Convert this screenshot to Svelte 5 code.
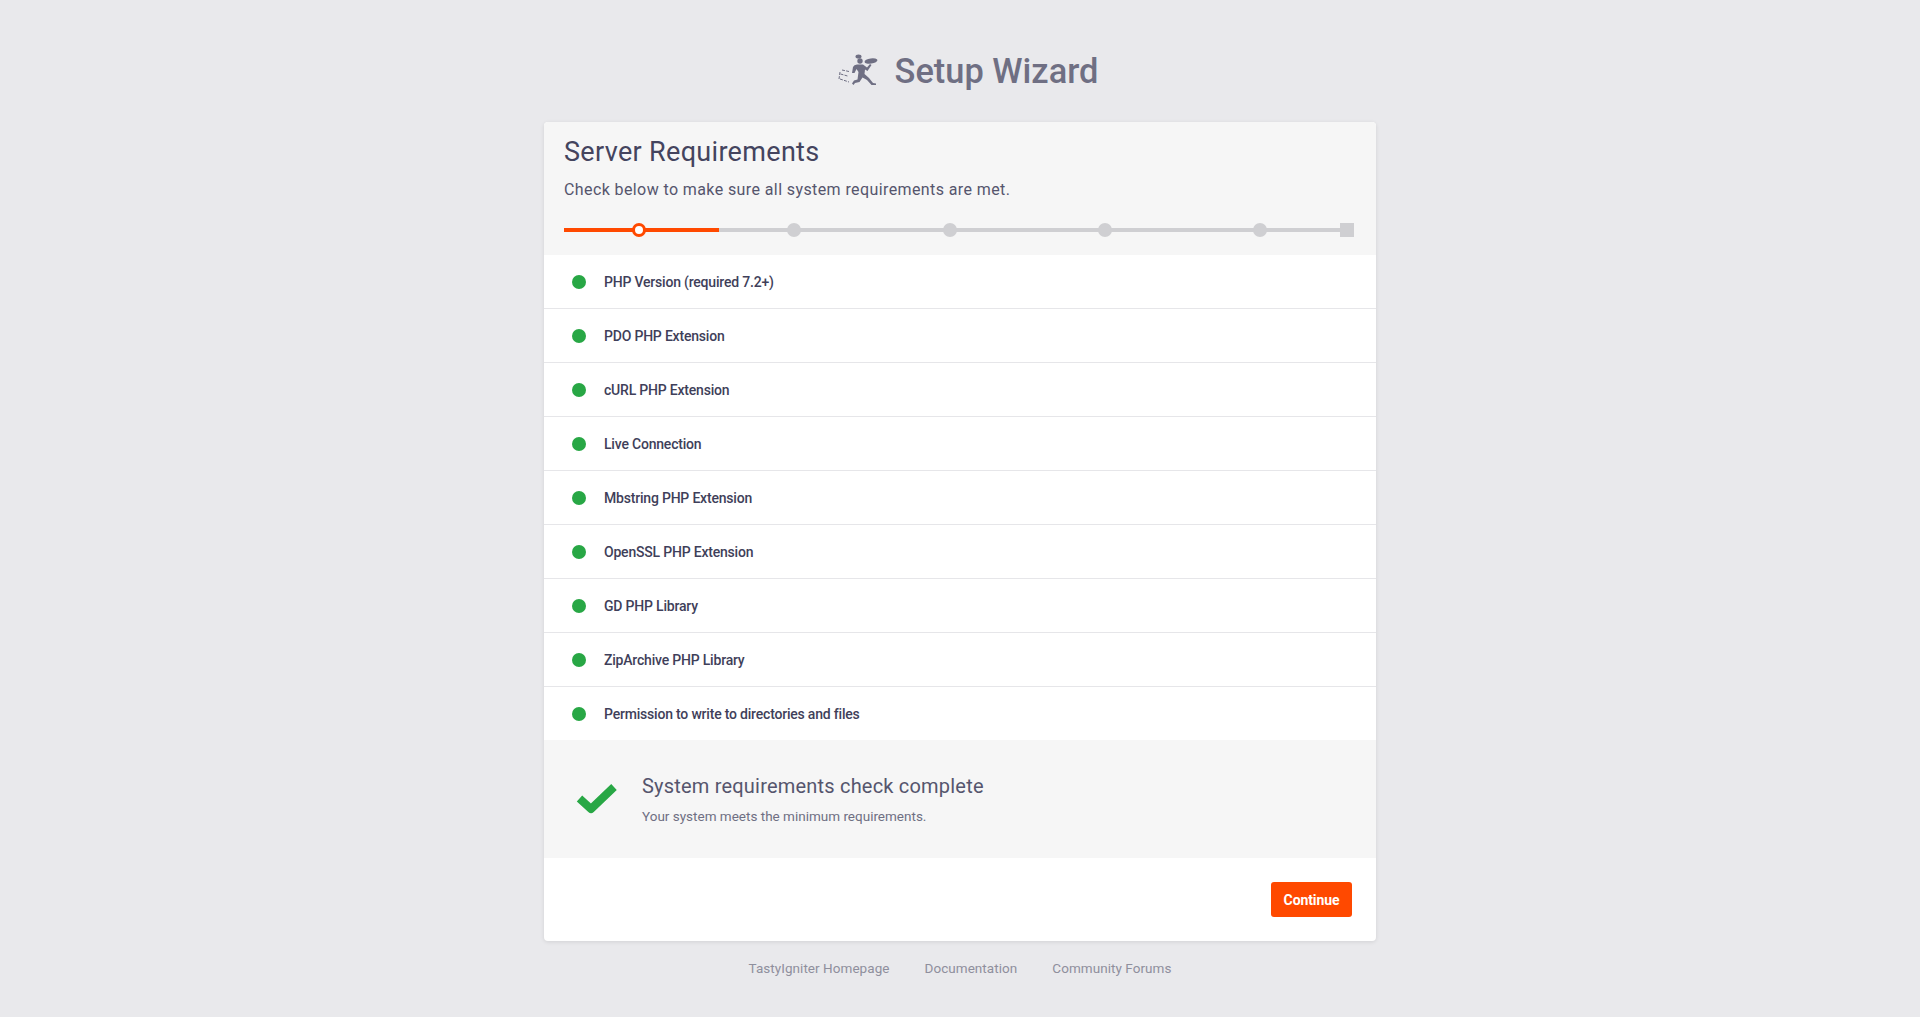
<script>
  const checks = [
    "PHP Version (required 7.2+)",
    "PDO PHP Extension",
    "cURL PHP Extension",
    "Live Connection",
    "Mbstring PHP Extension",
    "OpenSSL PHP Extension",
    "GD PHP Library",
    "ZipArchive PHP Library",
    "Permission to write to directories and files",
  ];
  const steps = [0, 1, 2, 3, 4];
  const links = ["TastyIgniter Homepage", "Documentation", "Community Forums"];
</script>

<div class="page">
  <header class="brand">
    <svg class="logo" viewBox="0 0 42 36" aria-hidden="true">
      <g fill="#6f6f83">
        <ellipse cx="20.500" cy="3.500" rx="3" ry="2" />
        <circle cx="22" cy="8" r="2.700" />
        <path d="M14 20L15 14Q16 11.500 19 11.500L25 11.500L29 14.500L32 11L33.500 12L29.500 18L27 16.500L26.500 21L31 25L35 30L38 30.500L38 32L33.500 32L29 27L24.500 24.500L21.500 29L17 30L15.500 32L14 30.500L16 27.500L19.500 26.500L20.500 19L18.500 16L16.500 20Z" />
        <ellipse cx="33" cy="8" rx="6.500" ry="2.600" transform="rotate(-8 33 8)" />
      </g>
      <g stroke="#6f6f83" stroke-width="1" stroke-dasharray="3 1.200" fill="none">
        <path d="M4 17l7 1.500" />
        <path d="M2.500 21l7 2" />
        <path d="M2 26l9 3" />
        <path d="M2 19l-1 7" />
      </g>
    </svg>
    <h1>Setup Wizard</h1>
  </header>

  <main class="card">
    <section class="head">
      <h2>Server Requirements</h2>
      <p>Check below to make sure all system requirements are met.</p>
      <div class="progress">
        {#each steps as step}
          <div class="step" class:active={step === 0}><span class="dot"></span></div>
        {/each}
        <span class="end"></span>
      </div>
    </section>

    <ul class="checks">
      {#each checks as check}
        <li><span class="ok"></span>{check}</li>
      {/each}
    </ul>

    <section class="result">
      <svg class="tick" viewBox="0 0 44 34" aria-hidden="true">
        <path d="M5.500 16.500L17 27L40 5" fill="none" stroke="#28a745" stroke-width="8" stroke-linejoin="round" />
      </svg>
      <div>
        <h3>System requirements check complete</h3>
        <p>Your system meets the minimum requirements.</p>
      </div>
    </section>

    <div class="actions">
      <button type="button">Continue</button>
    </div>
  </main>

  <footer>
    {#each links as link}
      <a href="#top">{link}</a>
    {/each}
  </footer>
</div>

<style>
  :global(body) {
    background: #e9e9ec;
    font-family: Roboto, "Liberation Sans", sans-serif;
  }

  .page {
    width: 832px;
    margin: 0 auto;
    padding-top: 50px;
  }

  .brand {
    display: flex;
    justify-content: center;
    align-items: center;
    gap: 15px;
    height: 42px;
    margin-bottom: 30px;
    padding-left: 16px;
  }

  .logo {
    width: 42px;
    height: 36px;
  }

  h1 {
    margin: 0;
    font-size: 34.400px;
    font-weight: 500;
    color: #6f6f83;
  }

  .card {
    background: #fff;
    border-radius: 4px;
    box-shadow: 0 1px 4px rgba(0, 0, 0, 0.1);
    overflow: hidden;
  }

  .head {
    height: 133px;
    box-sizing: border-box;
    padding: 14px 22px 0 20px;
    background: #f6f6f6;
  }

  h2 {
    margin: 0;
    font-size: 27px;
    line-height: 32px;
    font-weight: 400;
    letter-spacing: 0.32px;
    color: #44445e;
  }

  .head p {
    margin: 12px 0 0;
    font-size: 16px;
    line-height: 20px;
    letter-spacing: 0.4px;
    color: #55556d;
  }

  .progress {
    display: flex;
    align-items: center;
    margin-top: 23px;
  }

  .step {
    position: relative;
    display: flex;
    flex: 1;
    justify-content: center;
    height: 14px;
    padding-right: 5px;
  }

  .step::before {
    content: "";
    position: absolute;
    left: 0;
    right: 0;
    top: 5px;
    height: 4px;
    background: #cfcfd2;
  }

  .dot {
    position: relative;
    box-sizing: border-box;
    width: 14px;
    height: 14px;
    border-radius: 50%;
    background: #cfcfd2;
  }

  .step.active::before {
    background: #ff4900;
  }

  .step.active .dot {
    background: #fff;
    border: 3px solid #ff4900;
  }

  .end {
    width: 14px;
    height: 14px;
    background: #cfcfd2;
  }

  .checks {
    margin: 0;
    padding: 0;
    list-style: none;
  }

  .checks li {
    display: flex;
    align-items: center;
    height: 54px;
    box-sizing: border-box;
    padding-left: 28px;
    border-bottom: 1px solid #e6e6e9;
    font-size: 14px;
    font-weight: 500;
    letter-spacing: -0.2px;
    color: #3f3f5a;
  }

  .checks li:last-child {
    border-bottom: 0;
    height: 53px;
  }

  .ok {
    width: 14px;
    height: 14px;
    margin-right: 18px;
    border-radius: 50%;
    background: #28a745;
  }

  .result {
    display: flex;
    align-items: center;
    height: 118px;
    box-sizing: border-box;
    padding-left: 30px;
    background: #f6f6f6;
  }

  .tick {
    width: 44px;
    height: 34px;
    margin-right: 24px;
  }

  h3 {
    margin: 0;
    font-size: 20px;
    line-height: 26px;
    font-weight: 400;
    letter-spacing: 0.2px;
    color: #55556d;
  }

  .result p {
    margin: 8px 0 0;
    font-size: 13.500px;
    line-height: 18px;
    color: #6f6f83;
  }

  .actions {
    display: flex;
    justify-content: flex-end;
    height: 83px;
    box-sizing: border-box;
    padding: 24px 24px 0 0;
  }

  button {
    width: 81px;
    height: 35px;
    padding: 0;
    border: 0;
    border-radius: 3px;
    background: #ff4900;
    color: #fff;
    font: 700 14px Roboto, sans-serif;
    letter-spacing: -0.1px;
  }

  footer {
    display: flex;
    justify-content: center;
    gap: 35px;
    margin-top: 18px;
  }

  footer a {
    font-size: 13.500px;
    line-height: 18px;
    letter-spacing: 0.05px;
    color: #8f8f9d;
    text-decoration: none;
  }
</style>
